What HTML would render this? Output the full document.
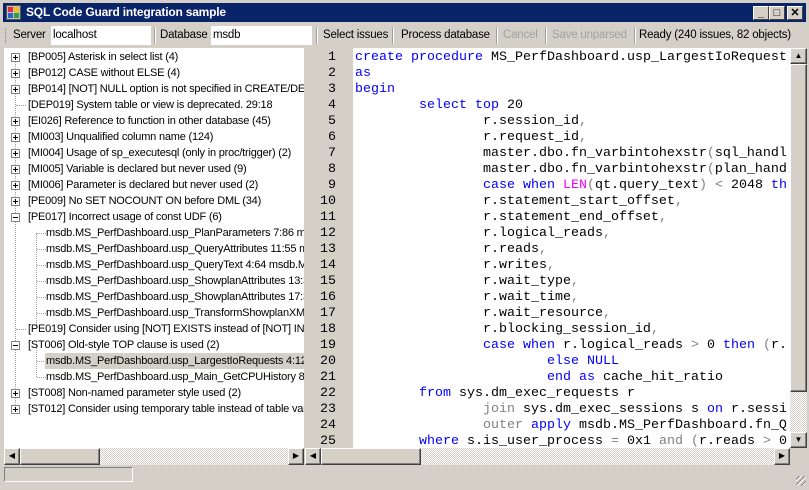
<!DOCTYPE html>
<html><head><meta charset="utf-8"><style>
*{margin:0;padding:0;box-sizing:border-box}
body{width:809px;height:490px;background:#d4d0c8;position:relative;overflow:hidden;font-family:Tahoma,"Liberation Sans",sans-serif;font-size:11px;color:#000}
.abs{position:absolute}
.title{left:3px;top:3px;width:803px;height:19px;background:#0a246a;color:#fff;font-weight:bold;font-size:12px;letter-spacing:-0.2px;line-height:19px;padding-left:23px}
.tb{width:16px;height:14px;top:6px;background:#d4d0c8;border:1px solid;border-color:#fff #404040 #404040 #fff;color:#000;font-size:11px;line-height:12px;text-align:center;font-weight:bold}
.tl{top:24px;height:22px;line-height:22px;font-size:11.5px;letter-spacing:-0.2px}
.sep{top:27px;width:2px;height:17px;border-left:1px solid #a0a0a0;border-right:1px solid #fff}
.box{top:26px;height:19px;background:#fff;font-size:11.5px;letter-spacing:-0.2px;line-height:19px;padding-left:2px}
.tree{left:4px;top:48px;width:300px;height:400px;background:#fff;overflow:hidden}
.row{position:absolute;height:16px;line-height:16px;font-size:11px;letter-spacing:-0.2px;white-space:nowrap}
.pm{position:absolute;width:9px;height:9px;border:1px solid #848484;background:#fff}
.pm:before{content:"";position:absolute;left:1px;top:3px;width:5px;height:1px;background:#000}
.pm.p:after{content:"";position:absolute;left:3px;top:1px;width:1px;height:5px;background:#000}
.dh{position:absolute;height:1px;border-top:1px dotted #a0a0a0}
.dv{position:absolute;width:1px;border-left:1px dotted #a0a0a0}
.gut{left:305px;top:48px;width:48px;height:400px;background:#d4d0c8}
.num{position:absolute;width:31px;text-align:right;font-family:"Liberation Mono",monospace;font-size:13.33px;line-height:16px}
.code{left:353px;top:48px;width:437px;height:400px;background:#fff;overflow:hidden}
.code pre{font-family:"Liberation Mono",monospace;font-size:13.33px;line-height:16px;padding-left:2px;padding-top:2px}
.k{color:#0000ff}.g{color:#808080}.m{color:#ff00ff}
.btn{background:#d4d0c8;border:1px solid;border-color:#fff #404040 #404040 #fff;box-shadow:inset -1px -1px #808080}
.trk{background-color:#ece9e2;background-image:repeating-conic-gradient(#fff 0 25%,#d4d0c8 0 50%);background-size:2px 2px}
.arr{font-size:8px;text-align:center;line-height:14px}
</style></head><body>
<div class="abs title">SQL Code Guard integration sample</div>
<div class="abs" style="left:6px;top:5px;width:15px;height:15px;background:#c0c0c0;border:1px solid #555">
 <div class="abs" style="left:1px;top:1px;width:5px;height:5px;background:#e03030"></div>
 <div class="abs" style="left:7px;top:1px;width:5px;height:5px;background:#f0c020"></div>
 <div class="abs" style="left:1px;top:7px;width:5px;height:5px;background:#3060d0"></div>
 <div class="abs" style="left:7px;top:7px;width:5px;height:5px;background:#30a030"></div>
</div>
<div class="abs tb" style="left:753px">_</div>
<div class="abs tb" style="left:769px">□</div>
<div class="abs tb" style="left:787px">✕</div>

<div class="abs" style="left:5px;top:28px;width:2px;height:15px;border-left:1px dotted #808080"></div>
<div class="abs tl" style="left:13px">Server</div>
<div class="abs box" style="left:51px;width:100px">localhost</div>
<div class="abs sep" style="left:154px"></div>
<div class="abs tl" style="left:160px">Database</div>
<div class="abs box" style="left:211px;width:101px">msdb</div>
<div class="abs sep" style="left:316px"></div>
<div class="abs tl" style="left:323px">Select issues</div>
<div class="abs sep" style="left:392px"></div>
<div class="abs tl" style="left:401px">Process database</div>
<div class="abs sep" style="left:496px"></div>
<div class="abs tl" style="left:503px;color:#a0a0a0">Cancel</div>
<div class="abs sep" style="left:545px"></div>
<div class="abs tl" style="left:552px;color:#a0a0a0">Save unparsed</div>
<div class="abs sep" style="left:634px"></div>
<div class="abs tl" style="left:639px">Ready (240 issues, 82 objects)</div>

<div class="abs tree">
 <div class="dv" style="left:11px;top:9px;height:352px"></div>
 <div class="dv" style="left:32px;top:185px;height:96px"></div>
 <div class="dv" style="left:32px;top:297px;height:32px"></div>
 <div class="pm p" style="left:7px;top:5px"></div><div class="row" style="left:24px;top:1px">[BP005] Asterisk in select list (4)</div>
 <div class="pm p" style="left:7px;top:21px"></div><div class="row" style="left:24px;top:17px">[BP012] CASE without ELSE (4)</div>
 <div class="pm p" style="left:7px;top:37px"></div><div class="row" style="left:24px;top:33px">[BP014] [NOT] NULL option is not specified in CREATE/DECLARE TABLE</div>
 <div class="dh" style="left:12px;top:57px;width:10px"></div><div class="row" style="left:24px;top:49px">[DEP019] System table or view is deprecated. 29:18</div>
 <div class="pm p" style="left:7px;top:69px"></div><div class="row" style="left:24px;top:65px">[EI026] Reference to function in other database (45)</div>
 <div class="pm p" style="left:7px;top:85px"></div><div class="row" style="left:24px;top:81px">[MI003] Unqualified column name (124)</div>
 <div class="pm p" style="left:7px;top:101px"></div><div class="row" style="left:24px;top:97px">[MI004] Usage of sp_executesql (only in proc/trigger) (2)</div>
 <div class="pm p" style="left:7px;top:117px"></div><div class="row" style="left:24px;top:113px">[MI005] Variable is declared but never used (9)</div>
 <div class="pm p" style="left:7px;top:133px"></div><div class="row" style="left:24px;top:129px">[MI006] Parameter is declared but never used (2)</div>
 <div class="pm p" style="left:7px;top:149px"></div><div class="row" style="left:24px;top:145px">[PE009] No SET NOCOUNT ON before DML (34)</div>
 <div class="pm" style="left:7px;top:165px"></div><div class="row" style="left:24px;top:161px">[PE017] Incorrect usage of const UDF (6)</div>
 <div class="dh" style="left:33px;top:185px;width:9px"></div><div class="row" style="left:42px;top:177px">msdb.MS_PerfDashboard.usp_PlanParameters 7:86 msdb.MS</div>
 <div class="dh" style="left:33px;top:201px;width:9px"></div><div class="row" style="left:42px;top:193px">msdb.MS_PerfDashboard.usp_QueryAttributes 11:55 msdb</div>
 <div class="dh" style="left:33px;top:217px;width:9px"></div><div class="row" style="left:42px;top:209px">msdb.MS_PerfDashboard.usp_QueryText 4:64 msdb.MS_Perf</div>
 <div class="dh" style="left:33px;top:233px;width:9px"></div><div class="row" style="left:42px;top:225px">msdb.MS_PerfDashboard.usp_ShowplanAttributes 13:33</div>
 <div class="dh" style="left:33px;top:249px;width:9px"></div><div class="row" style="left:42px;top:241px">msdb.MS_PerfDashboard.usp_ShowplanAttributes 17:33</div>
 <div class="dh" style="left:33px;top:265px;width:9px"></div><div class="row" style="left:42px;top:257px">msdb.MS_PerfDashboard.usp_TransformShowplanXML</div>
 <div class="dh" style="left:12px;top:281px;width:10px"></div><div class="row" style="left:24px;top:273px">[PE019] Consider using [NOT] EXISTS instead of [NOT] IN</div>
 <div class="pm" style="left:7px;top:293px"></div><div class="row" style="left:24px;top:289px">[ST006] Old-style TOP clause is used (2)</div>
 <div class="dh" style="left:33px;top:313px;width:9px"></div><div class="row" style="left:41px;top:305px;background:#d4d0c8;width:260px;padding-left:1px">msdb.MS_PerfDashboard.usp_LargestIoRequests 4:12</div>
 <div class="dh" style="left:33px;top:329px;width:9px"></div><div class="row" style="left:42px;top:321px">msdb.MS_PerfDashboard.usp_Main_GetCPUHistory 8:1</div>
 <div class="pm p" style="left:7px;top:341px"></div><div class="row" style="left:24px;top:337px">[ST008] Non-named parameter style used (2)</div>
 <div class="pm p" style="left:7px;top:357px"></div><div class="row" style="left:24px;top:353px">[ST012] Consider using temporary table instead of table variable</div>
</div>

<div class="abs gut">
<div class="num" style="left:0;top:2px">1<br>2<br>3<br>4<br>5<br>6<br>7<br>8<br>9<br>10<br>11<br>12<br>13<br>14<br>15<br>16<br>17<br>18<br>19<br>20<br>21<br>22<br>23<br>24<br>25</div>
</div>
<div class="abs code"><pre><span class="k">create procedure</span> MS_PerfDashboard.usp_LargestIoRequest
<span class="k">as</span>
<span class="k">begin</span>
        <span class="k">select top</span> 20
                r.session_id<span class="g">,</span>
                r.request_id<span class="g">,</span>
                master.dbo.fn_varbintohexstr<span class="g">(</span>sql_handl
                master.dbo.fn_varbintohexstr<span class="g">(</span>plan_hand
                <span class="k">case when</span> <span class="m">LEN</span><span class="g">(</span>qt.query_text<span class="g">) &lt;</span> 2048 <span class="k">th</span>
                r.statement_start_offset<span class="g">,</span>
                r.statement_end_offset<span class="g">,</span>
                r.logical_reads<span class="g">,</span>
                r.reads<span class="g">,</span>
                r.writes<span class="g">,</span>
                r.wait_type<span class="g">,</span>
                r.wait_time<span class="g">,</span>
                r.wait_resource<span class="g">,</span>
                r.blocking_session_id<span class="g">,</span>
                <span class="k">case when</span> r.logical_reads <span class="g">&gt;</span> 0 <span class="k">then</span> <span class="g">(</span>r.
                        <span class="k">else NULL</span>
                        <span class="k">end as</span> cache_hit_ratio
        <span class="k">from</span> sys.dm_exec_requests r
                <span class="g">join</span> sys.dm_exec_sessions s <span class="k">on</span> r.sessi
                <span class="g">outer</span> <span class="k">apply</span> msdb.MS_PerfDashboard.fn_Q
        <span class="k">where</span> s.is_user_process <span class="g">=</span> 0x1 <span class="g">and (</span>r.reads <span class="g">&gt;</span> 0</pre></div>

<div class="abs trk" style="left:790px;top:48px;width:17px;height:400px"></div>
<div class="abs btn arr" style="left:790px;top:48px;width:17px;height:16px">▲</div>
<div class="abs btn" style="left:790px;top:64px;width:17px;height:328px"></div>
<div class="abs btn arr" style="left:790px;top:432px;width:17px;height:16px">▼</div>
<div class="abs trk" style="left:4px;top:448px;width:300px;height:17px"></div>
<div class="abs btn arr" style="left:4px;top:448px;width:16px;height:17px">◀</div>
<div class="abs btn" style="left:20px;top:448px;width:80px;height:17px"></div>
<div class="abs btn arr" style="left:288px;top:448px;width:16px;height:17px">▶</div>
<div class="abs trk" style="left:305px;top:448px;width:485px;height:17px"></div>
<div class="abs btn arr" style="left:305px;top:448px;width:16px;height:17px">◀</div>
<div class="abs btn" style="left:321px;top:448px;width:100px;height:17px"></div>
<div class="abs btn arr" style="left:774px;top:448px;width:16px;height:17px">▶</div>
<div class="abs" style="left:4px;top:467px;width:129px;height:15px;border:1px solid;border-color:#808080 #fff #fff #808080"></div>
<div class="abs" style="left:796px;top:476px;width:10px;height:10px;background:repeating-linear-gradient(135deg,transparent 0 2px,#808080 2px 3px,#fff 3px 4px)"></div>
</body></html>
